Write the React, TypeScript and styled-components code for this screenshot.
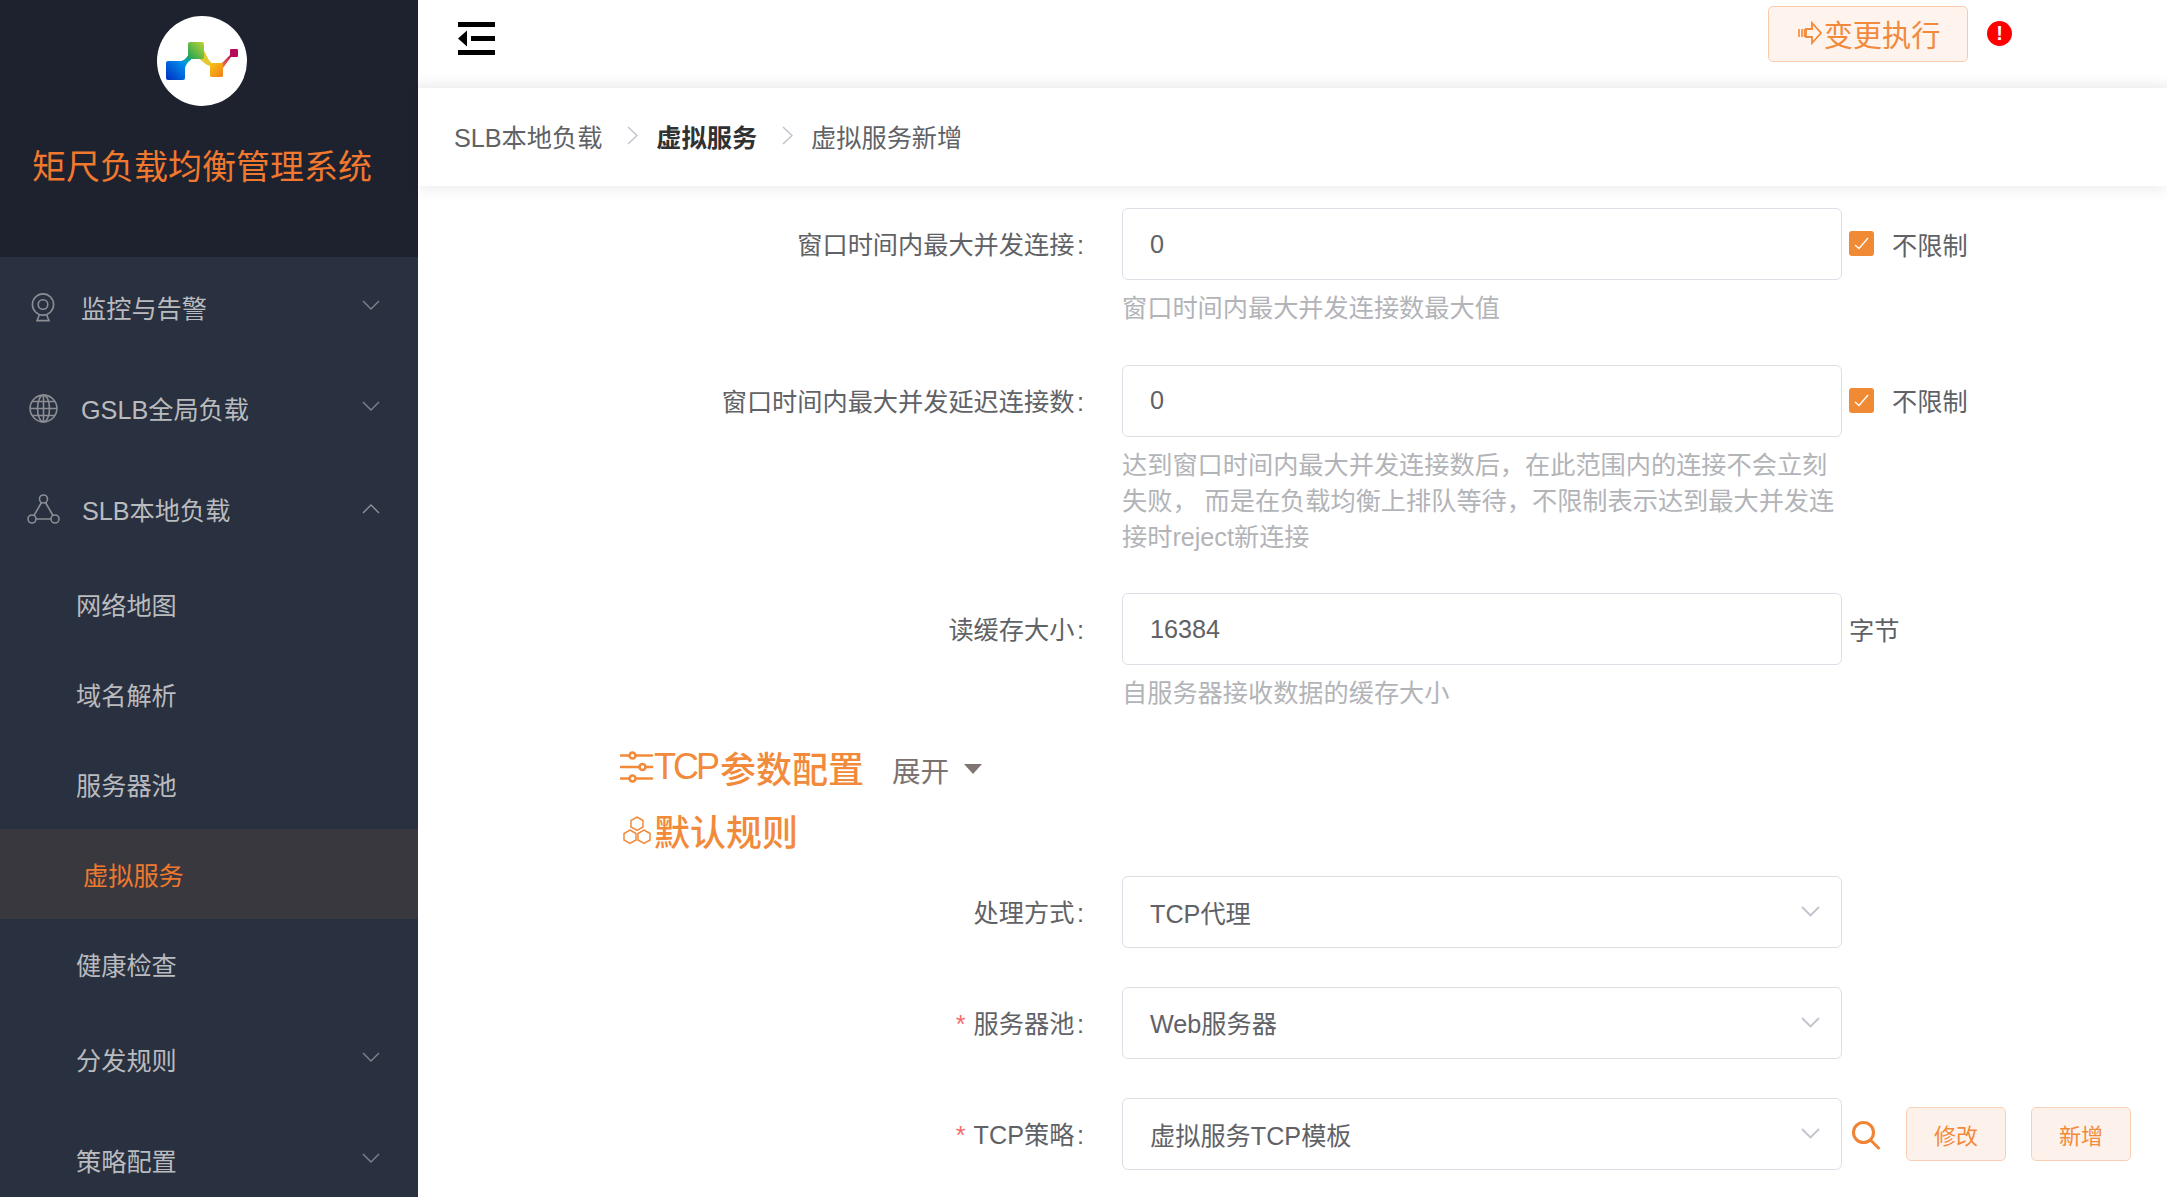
import React from 'react';
import styled, { createGlobalStyle } from 'styled-components';

const FONT = '"Liberation Sans", "Noto Sans CJK SC", sans-serif';
const ORANGE = '#f28a3c';
const TEXT = '#606266';

const GlobalStyle = createGlobalStyle`
  html, body {
    margin: 0;
    height: 100%;
    overflow: hidden;
    background: #fff;
    font-family: ${FONT};
    font-size: 25.2px;
    color: ${TEXT};
  }
`;

const Layout = styled.div`
  display: flex;
  width: 100%;
  height: 100vh;
  overflow: hidden;
`;

const Sidebar = styled.aside`
  flex: 0 0 418px;
  background: #29303f;
  overflow: hidden;
`;

const Brand = styled.div`
  height: 257px;
  box-sizing: border-box;
  padding: 16px 14px 0 0;
  background: #1d222e;
  display: flex;
  flex-direction: column;
  align-items: center;
`;

const LogoCircle = styled.div`
  width: 90px;
  height: 90px;
  border-radius: 50%;
  background: #fff;
  flex: none;
`;

const BrandTitle = styled.div`
  margin-top: 37px;
  font-size: 34px;
  line-height: 48px;
  color: #f0782f;
`;

const MenuRow = styled.div`
  height: 100.7px;
  display: flex;
  align-items: center;
  padding: 0 38px 0 27px;
  color: #b9bbbe;
  white-space: nowrap;
`;

const MenuIcon = styled.span`
  flex: 0 0 32px;
  margin-right: 22px;
  display: flex;
  justify-content: center;
`;

const SubRow = styled.div<{ $active?: boolean }>`
  height: 90px;
  display: flex;
  align-items: center;
  padding-left: ${p => (p.$active ? '83px' : '76px')};
  background: ${p => (p.$active ? '#38383e' : 'transparent')};
  color: ${p => (p.$active ? '#f0782f' : '#b9bbbe')};
`;

const SubGroupRow = styled(MenuRow)`
  padding-left: 76px;
`;

const Chevron = styled.svg<{ $up?: boolean }>`
  margin-left: auto;
  margin-bottom: ${p => (p.$up ? '0' : '4px')};
  width: 18px;
  height: 10px;
  flex: none;
`;

const Main = styled.main`
  flex: 1;
  min-width: 0;
  display: flex;
  flex-direction: column;
`;

const TopBar = styled.header`
  height: 88px;
  flex: none;
  box-sizing: border-box;
  display: flex;
  align-items: flex-start;
  padding: 6px 155px 0 40px;
  background: linear-gradient(#fff 84%, #f6f6f6);
`;

const MenuToggle = styled.svg`
  width: 37px;
  height: 33px;
  margin-top: 16px;
`;

const ExecuteButton = styled.button`
  margin-left: auto;
  width: 200px;
  height: 56px;
  display: flex;
  align-items: center;
  justify-content: center;
  padding: 0 0 2px 2px;
  border: 1px solid #f9cbab;
  border-radius: 5px;
  background: #fef4ed;
  color: ${ORANGE};
  font-family: ${FONT};
  font-size: 29.2px;
`;

const ExecuteIcon = styled.svg`
  width: 25px;
  height: 24px;
  margin-right: 1px;
`;

const AlertDot = styled.span`
  width: 25px;
  height: 25px;
  margin: 15px 0 0 19px;
  border-radius: 50%;
  background: #f00;
  color: #fff;
  font-size: 20px;
  font-weight: bold;
  line-height: 25px;
  text-align: center;
`;

const Breadcrumb = styled.nav`
  height: 98px;
  flex: none;
  box-sizing: border-box;
  display: flex;
  align-items: center;
  padding: 0 0 3px 36px;
  background: #fff;
  position: relative;
  z-index: 1;
  box-shadow: 0 3px 14px rgba(0, 0, 0, 0.08);
`;

const Crumb = styled.span<{ $current?: boolean }>`
  font-weight: ${p => (p.$current ? 700 : 400)};
  color: ${p => (p.$current ? '#303133' : TEXT)};
`;

const CrumbSep = styled.svg`
  width: 11px;
  height: 19px;
  margin: 0 18px 0 25px;
`;

const Content = styled.div`
  flex: 1;
  min-height: 0;
  overflow: hidden;
  padding-top: 22px;
`;

const FormItem = styled.div<{ $gap?: number }>`
  display: flex;
  align-items: flex-start;
  margin-bottom: ${p => p.$gap ?? 38.5}px;
`;

const Label = styled.label`
  flex: 0 0 668px;
  margin-right: 36px;
  height: 72px;
  line-height: 74px;
  text-align: right;
  white-space: nowrap;
`;

const Colon = styled.span`
  margin: 0 2px 0 2.7px;
`;

const Required = styled.span`
  color: #f56c6c;
  margin-right: 8px;
`;

const Field = styled.div`
  flex: 0 0 720px;
`;

const TextInput = styled.input`
  display: block;
  width: 100%;
  height: 72px;
  box-sizing: border-box;
  padding: 0 27px;
  border: 1px solid #dcdfe6;
  border-radius: 6px;
  background: #fff;
  color: ${TEXT};
  font-family: ${FONT};
  font-size: 25.2px;
  outline: none;
`;

const SelectBox = styled.div`
  height: 72px;
  box-sizing: border-box;
  padding: 0 21px 1px 27px;
  border: 1px solid #dcdfe6;
  border-radius: 6px;
  display: flex;
  align-items: center;
  justify-content: space-between;
`;

const SelectArrow = styled.svg`
  width: 19px;
  height: 11px;
`;

const Help = styled.div`
  margin-top: 10px;
  line-height: 36px;
  color: #b2b4b8;
`;

const Trailing = styled.div`
  height: 72px;
  box-sizing: border-box;
  margin-left: 7px;
  padding-bottom: 1px;
  display: flex;
  align-items: center;
  white-space: nowrap;
`;

const CheckMark = styled.span`
  width: 25px;
  height: 25px;
  margin-right: 18px;
  border-radius: 3px;
  background: #f08a35;
  display: flex;
  align-items: center;
  justify-content: center;
`;

const SearchIcon = styled.svg`
  width: 28px;
  height: 29px;
  margin: 4px 26px 0 3px;
`;

const SmallButton = styled.button`
  width: 100px;
  height: 54px;
  margin-right: 25px;
  border: 1px solid #f9cfb3;
  border-radius: 5px;
  background: #fdf2eb;
  color: ${ORANGE};
  font-family: ${FONT};
  font-size: 22px;
  padding: 0;
`;

const SectionHead = styled.div<{ $height: number; $gap?: number }>`
  height: ${p => p.$height}px;
  margin-bottom: ${p => p.$gap ?? 0}px;
  padding-left: 202px;
  display: flex;
  align-items: center;
  color: ${ORANGE};
  font-size: 36px;
  font-weight: 500;
  white-space: nowrap;
`;

const NarrowLatin = styled.span`
  letter-spacing: -3px;
  margin-right: 3px;
`;

const Expand = styled.span`
  margin-left: 28px;
  padding-top: 4px;
  display: flex;
  align-items: center;
  font-size: 28.6px;
  font-weight: 400;
  color: #7c7270;
`;

const ExpandCaret = styled.span`
  width: 0;
  height: 0;
  margin-left: 15px;
  border-left: 9px solid transparent;
  border-right: 9px solid transparent;
  border-top: 10px solid #7f7573;
`;

const SlidersGlyph = styled.svg`
  width: 34px;
  height: 32px;
  flex: none;
`;

const HexGlyph = styled.svg`
  width: 30px;
  height: 29px;
  flex: none;
  margin: 0 2px;
`;

const Logo = () => (
  <svg width="90" height="90" viewBox="0 0 90 90">
    <defs>
      <linearGradient id="lb" x1="0" y1="1" x2="1" y2="0">
        <stop offset="0" stopColor="#0030c0" />
        <stop offset="1" stopColor="#0098f2" />
      </linearGradient>
      <linearGradient id="lg" x1="0" y1="1" x2="1" y2="0">
        <stop offset="0" stopColor="#18a058" />
        <stop offset="1" stopColor="#bdd432" />
      </linearGradient>
      <linearGradient id="lo" x1="1" y1="1" x2="0" y2="0">
        <stop offset="0" stopColor="#f0801e" />
        <stop offset="1" stopColor="#f8c414" />
      </linearGradient>
      <linearGradient id="lp" x1="0" y1="1" x2="1" y2="0">
        <stop offset="0" stopColor="#f08a40" />
        <stop offset="1" stopColor="#b80a5a" />
      </linearGradient>
    </defs>
    <path d="M24 45C29 44 30 40 33 37L34 44C31 45 29 49 28 52Z" fill="#0aa0b0" />
    <rect x="9" y="45" width="19" height="19" rx="2" fill="url(#lb)" />
    <path d="M46 33C49 37 51 45 55 47L53 50C47 48 45 44 42 43Z" fill="#e4c830" />
    <rect x="31" y="26" width="16" height="17" rx="2" fill="url(#lg)" />
    <path d="M64 48L74 38L75 39.5L66 52Z" fill="url(#lp)" />
    <rect x="53" y="47" width="13" height="14" rx="1.5" fill="url(#lo)" />
    <rect x="73" y="33" width="8" height="8" rx="1" fill="#b80a5a" />
  </svg>
);

const WebcamIcon = () => (
  <svg width="24" height="29" viewBox="0 0 24 29" fill="none" stroke="#8b8e94" strokeWidth="1.6">
    <circle cx="12" cy="11.5" r="10.6" />
    <circle cx="12" cy="11.5" r="4.8" />
    <path d="M8.5 21.5L6 27.6H18L15.5 21.5" />
  </svg>
);

const GlobeIcon = () => (
  <svg width="29" height="29" viewBox="0 0 29 29" fill="none" stroke="#8b8e94" strokeWidth="1.6">
    <circle cx="14.5" cy="14.5" r="13.4" />
    <ellipse cx="14.5" cy="14.5" rx="6" ry="13.4" />
    <path d="M14.5 1V28M1.2 14.5H27.8M3.5 7.5H25.5M3.5 21.5H25.5" />
  </svg>
);

const NodesIcon = () => (
  <svg width="33" height="30" viewBox="0 0 33 30" fill="none" stroke="#8b8e94" strokeWidth="1.6">
    <circle cx="16.5" cy="5" r="4" />
    <circle cx="5" cy="25" r="4" />
    <circle cx="28" cy="25" r="4" />
    <path d="M14.5 8.5L7 21.5M18.5 8.5L26 21.5M9 25H24" />
  </svg>
);

const DownChevron = () => (
  <Chevron viewBox="0 0 18 10" fill="none" stroke="#7f838b" strokeWidth="1.4">
    <path d="M1 1L9 9L17 1" />
  </Chevron>
);

const UpChevron = () => (
  <Chevron $up viewBox="0 0 18 10" fill="none" stroke="#8f9298" strokeWidth="1.4">
    <path d="M1 9L9 1L17 9" />
  </Chevron>
);

const Separator = () => (
  <CrumbSep viewBox="0 0 11 19" fill="none" stroke="#c0c4cc" strokeWidth="1.5">
    <path d="M1 1L10 9.5L1 18" />
  </CrumbSep>
);

const Arrow = () => (
  <SelectArrow viewBox="0 0 19 11" fill="none" stroke="#c0c4cc" strokeWidth="1.8">
    <path d="M1 1L9.5 9.5L18 1" />
  </SelectArrow>
);

const Checked = () => (
  <CheckMark>
    <svg width="15" height="13" viewBox="0 0 15 13" fill="none" stroke="#fff" strokeWidth="1.3">
      <path d="M1 8L5 11.5L14 1" />
    </svg>
  </CheckMark>
);

const SlidersIcon = () => (
  <SlidersGlyph viewBox="0 0 34 32" fill="none" stroke={ORANGE} strokeWidth="2.6" strokeLinecap="round">
    <path d="M1 4.5H9M16 4.5H32M1 16H19M26 16H32M1 27.5H9M16 27.5H32" />
    <circle cx="12.5" cy="4.5" r="3" />
    <circle cx="22.5" cy="16" r="3" />
    <circle cx="12.5" cy="27.5" r="3" />
  </SlidersGlyph>
);

const HexIcon = () => (
  <HexGlyph viewBox="0 0 30 29" fill="none" stroke={ORANGE} strokeWidth="1.5">
    <path d="M15 1L21 4.5V11L15 14.5L9 11V4.5Z" />
    <path d="M8 14L14 17.5V24L8 27.5L2 24V17.5Z" />
    <path d="M22 14L28 17.5V24L22 27.5L16 24V17.5Z" />
  </HexGlyph>
);

const App: React.FC = () => {
  return (
    <Layout>
      <GlobalStyle />
      <Sidebar>
        <Brand>
          <LogoCircle>
            <Logo />
          </LogoCircle>
          <BrandTitle>矩尺负载均衡管理系统</BrandTitle>
        </Brand>
        <MenuRow>
          <MenuIcon><WebcamIcon /></MenuIcon>监控与告警<DownChevron />
        </MenuRow>
        <MenuRow>
          <MenuIcon><GlobeIcon /></MenuIcon>GSLB全局负载<DownChevron />
        </MenuRow>
        <MenuRow>
          <MenuIcon><NodesIcon /></MenuIcon>SLB本地负载<UpChevron />
        </MenuRow>
        <SubRow>网络地图</SubRow>
        <SubRow>域名解析</SubRow>
        <SubRow>服务器池</SubRow>
        <SubRow $active>虚拟服务</SubRow>
        <SubRow>健康检查</SubRow>
        <SubGroupRow>分发规则<DownChevron /></SubGroupRow>
        <SubGroupRow>策略配置<DownChevron /></SubGroupRow>
      </Sidebar>

      <Main>
        <TopBar>
          <MenuToggle viewBox="0 0 37 33" fill="#000">
            <rect x="0" y="0" width="37" height="5" />
            <rect x="13" y="14" width="24" height="5" />
            <path d="M9 8.5V24.5L0 16.5Z" />
            <rect x="0" y="28" width="37" height="5" />
          </MenuToggle>
          <ExecuteButton>
            <ExecuteIcon viewBox="0 0 25 24" fill="none" stroke={ORANGE} strokeWidth="1.8">
              <path d="M8 8H14V2L23 12L14 22V16H8Z" />
              <path d="M1 8V16M4 8V16M6.5 8V16" strokeWidth="1.6" />
            </ExecuteIcon>
            变更执行
          </ExecuteButton>
          <AlertDot>!</AlertDot>
        </TopBar>

        <Breadcrumb>
          <Crumb>SLB本地负载</Crumb>
          <Separator />
          <Crumb $current>虚拟服务</Crumb>
          <Separator />
          <Crumb>虚拟服务新增</Crumb>
        </Breadcrumb>

        <Content>
          <FormItem>
            <Label>窗口时间内最大并发连接<Colon>:</Colon></Label>
            <Field>
              <TextInput readOnly value="0" />
              <Help>窗口时间内最大并发连接数最大值</Help>
            </Field>
            <Trailing><Checked />不限制</Trailing>
          </FormItem>

          <FormItem>
            <Label>窗口时间内最大并发延迟连接数<Colon>:</Colon></Label>
            <Field>
              <TextInput readOnly value="0" />
              <Help>达到窗口时间内最大并发连接数后，在此范围内的连接不会立刻失败， 而是在负载均衡上排队等待，不限制表示达到最大并发连接时reject新连接</Help>
            </Field>
            <Trailing><Checked />不限制</Trailing>
          </FormItem>

          <FormItem $gap={25}>
            <Label>读缓存大小<Colon>:</Colon></Label>
            <Field>
              <TextInput readOnly value="16384" />
              <Help>自服务器接收数据的缓存大小</Help>
            </Field>
            <Trailing>字节</Trailing>
          </FormItem>

          <SectionHead $height={62}>
            <SlidersIcon /><NarrowLatin>TCP</NarrowLatin>参数配置
            <Expand>展开<ExpandCaret /></Expand>
          </SectionHead>
          <SectionHead $height={64} $gap={14}>
            <HexIcon />默认规则
          </SectionHead>

          <FormItem>
            <Label>处理方式<Colon>:</Colon></Label>
            <Field>
              <SelectBox>TCP代理<Arrow /></SelectBox>
            </Field>
          </FormItem>

          <FormItem $gap={39.5}>
            <Label><Required>*</Required>服务器池<Colon>:</Colon></Label>
            <Field>
              <SelectBox>Web服务器<Arrow /></SelectBox>
            </Field>
          </FormItem>

          <FormItem>
            <Label><Required>*</Required>TCP策略<Colon>:</Colon></Label>
            <Field>
              <SelectBox>虚拟服务TCP模板<Arrow /></SelectBox>
            </Field>
            <Trailing>
              <SearchIcon viewBox="0 0 28 29" fill="none" stroke="#ef8432" strokeWidth="3">
                <circle cx="11.5" cy="11.5" r="10" />
                <path d="M18.5 19L26.5 27" strokeLinecap="round" />
              </SearchIcon>
              <SmallButton>修改</SmallButton>
              <SmallButton>新增</SmallButton>
            </Trailing>
          </FormItem>
        </Content>
      </Main>
    </Layout>
  );
};

export default App;
